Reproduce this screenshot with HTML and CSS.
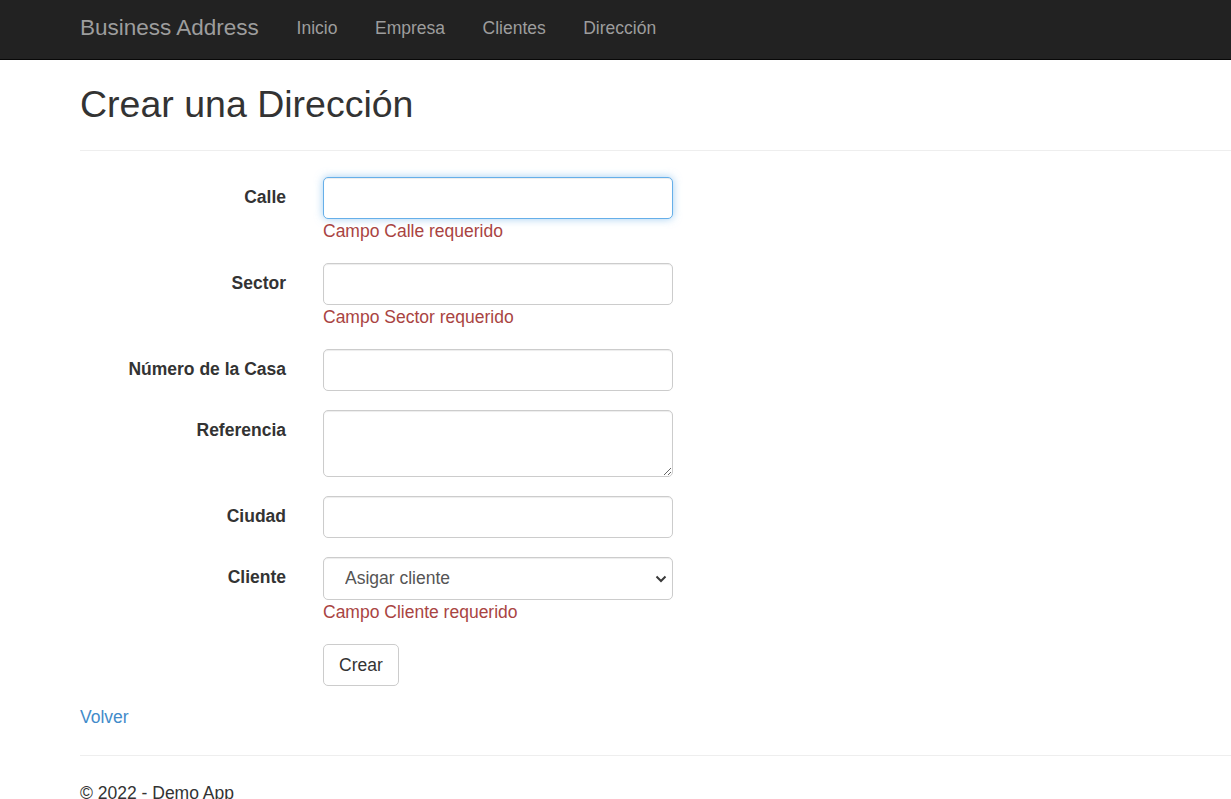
FILE: index.html
```html
<!DOCTYPE html>
<html lang="es">
<head>
<meta charset="utf-8">
<title>Crear una Dirección - Business Address</title>
<link rel="stylesheet" href="styles.css">
</head>
<body>
<nav class="navbar">
  <div class="navbar-inner">
    <a class="brand" href="#">Business Address</a>
    <ul class="nav">
      <li><a href="#">Inicio</a></li>
      <li><a href="#">Empresa</a></li>
      <li><a href="#">Clientes</a></li>
      <li><a href="#">Dirección</a></li>
    </ul>
  </div>
</nav>
<div class="page">
  <h2 class="title">Crear una Dirección</h2>
  <hr class="rule rule-top">
  <form class="form">
    <div class="group">
      <label class="label">Calle</label>
      <div class="field">
        <input class="control focused" type="text">
        <span class="error">Campo Calle requerido</span>
      </div>
    </div>
    <div class="group">
      <label class="label">Sector</label>
      <div class="field">
        <input class="control" type="text">
        <span class="error">Campo Sector requerido</span>
      </div>
    </div>
    <div class="group">
      <label class="label">Número de la Casa</label>
      <div class="field">
        <input class="control" type="text">
      </div>
    </div>
    <div class="group">
      <label class="label">Referencia</label>
      <div class="field">
        <textarea class="control textarea" rows="2"></textarea>
      </div>
    </div>
    <div class="group">
      <label class="label">Ciudad</label>
      <div class="field">
        <input class="control" type="text">
      </div>
    </div>
    <div class="group">
      <label class="label">Cliente</label>
      <div class="field">
        <div class="select-wrap">
          <select class="control select">
            <option>Asigar cliente</option>
          </select>
          <svg class="chevron" width="12" height="8" viewBox="0 0 12 8"><path d="M1.5 1.5 L6 6 L10.5 1.5" fill="none" stroke="#3a3a3a" stroke-width="2"/></svg>
        </div>
        <span class="error">Campo Cliente requerido</span>
      </div>
    </div>
    <div class="group">
      <div class="label"></div>
      <div class="field">
        <button class="btn" type="button">Crear</button>
      </div>
    </div>
  </form>
  <div class="back"><a href="#">Volver</a></div>
  <hr class="rule rule-bottom">
  <footer class="footer">
    <p>© 2022 - Demo App</p>
  </footer>
</div>
</body>
</html>
```

FILE: styles.css
```css
* { box-sizing: border-box; }
html, body { margin: 0; padding: 0; }
body {
  font-family: "Liberation Sans", Arial, Helvetica, sans-serif;
  font-size: 17.5px;
  line-height: 25px;
  color: #333;
  background: #fff;
  overflow: hidden;
}
a { text-decoration: none; }

.navbar {
  background: #222;
  border-bottom: 1px solid #080808;
  height: 60px;
}
.navbar-inner {
  display: flex;
  align-items: flex-start;
  padding-left: 80px;
}
.brand {
  color: #9d9d9d;
  font-size: 22.5px;
  line-height: 25px;
  padding: 15px 19px 0 0;
}
.nav {
  display: flex;
  list-style: none;
  margin: 0;
  padding: 0;
}
.nav a {
  display: block;
  color: #9d9d9d;
  font-size: 17.5px;
  line-height: 25px;
  padding: 15.5px 18.75px 0;
}

.page {
  padding: 24px 0 0 80px;
}
.title {
  margin: 0;
  font-size: 37.5px;
  font-weight: 400;
  line-height: 41px;
  color: #333;
}
.rule {
  border: 0;
  border-top: 1px solid #eee;
  height: 0;
  margin: 0;
}
.rule-top { margin-top: 25px; margin-bottom: 26px; }

.form { display: flex; flex-direction: column; }
.group {
  display: flex;
  gap: 37px;
  margin-bottom: 19px;
}
.label {
  width: 206px;
  flex: none;
  text-align: right;
  font-weight: 700;
  padding-top: 8px;
}
.field {
  width: 350px;
  display: flex;
  flex-direction: column;
}
.control {
  display: block;
  width: 350px;
  height: 42px;
  padding: 7.5px 15px;
  font-family: inherit;
  font-size: 17.5px;
  line-height: 25px;
  color: #555;
  background: #fff;
  border: 1px solid #ccc;
  border-radius: 5px;
  box-shadow: inset 0 1px 1px rgba(0,0,0,.075);
  margin: 0;
  outline: none;
}
.focused {
  border-color: #66afe9;
  box-shadow: inset 0 1px 1px rgba(0,0,0,.075), 0 0 8px rgba(102,175,233,.6);
}
.textarea {
  height: 67px;
  resize: both;
}
.select-wrap { position: relative; }
.select {
  -webkit-appearance: none;
  appearance: none;
  height: 43px;
  padding-left: 21px;
  padding-top: 8px;
  color: #555;
}
.chevron {
  position: absolute;
  right: 6px;
  top: 18px;
  pointer-events: none;
}
.error {
  color: #a94442;
  line-height: 25px;
}
.btn {
  align-self: flex-start;
  height: 42px;
  padding: 7.5px 15px;
  font-family: inherit;
  font-size: 17.5px;
  line-height: 25px;
  color: #333;
  background: #fff;
  border: 1px solid #ccc;
  border-radius: 5px;
  cursor: pointer;
}
.back a { color: #428bca; }
.rule-bottom { margin-top: 25px; margin-bottom: 25px; }
.footer p { margin: 0; }
```
